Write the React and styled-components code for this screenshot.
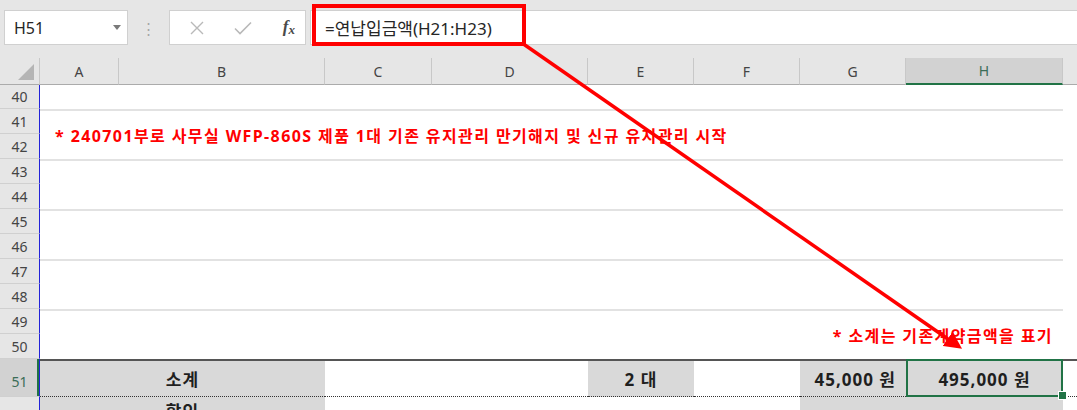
import React from "react";
import styled, { createGlobalStyle } from "styled-components";

const GlobalStyle = createGlobalStyle`
  html, body {
    margin: 0;
    padding: 0;
    height: 410px;
    overflow: hidden;
    background: #ffffff;
  }
  * { box-sizing: border-box; }
`;

const SANS = `"Noto Sans", "Noto Sans CJK KR", sans-serif`;
const GREEN = "#217346";

const App = () => {
  return (
    <Page>
      <GlobalStyle />
      <TopBar>
        <NameBox>
          <span>H51</span>
          <Caret />
        </NameBox>
        <Grip>⋮</Grip>
        <FxButtons>
          <svg width="14" height="14" viewBox="0 0 14 14">
            <path d="M1 1 L13 13 M13 1 L1 13" stroke="#b9b9b9" strokeWidth="1.4" fill="none" />
          </svg>
          <svg width="18" height="14" viewBox="0 0 18 14">
            <path d="M1 7.5 L6 12.5 L17 1.5" stroke="#b9b9b9" strokeWidth="1.6" fill="none" />
          </svg>
          <FxLabel>f<sub>x</sub></FxLabel>
        </FxButtons>
        <FormulaInput>=연납입금액(H21:H23)</FormulaInput>
      </TopBar>

      <Sheet>
        <Corner>
          <svg width="40" height="27" viewBox="0 0 40 27">
            <path d="M34 6 L34 22 L18 22 Z" fill="#b5b5b5" />
          </svg>
        </Corner>
        {["A", "B", "C", "D", "E", "F", "G", "H"].map((c, i) => (
          <ColHead key={c} $col={i + 2} $active={c === "H"}>{c}</ColHead>
        ))}
        <ColHead $col={10} $blank />

        {[40, 41, 42, 43, 44, 45, 46, 47, 48, 49, 50, 51, 52].map((n, i) => (
          <RowHead key={n} $row={i + 2} $active={n === 51} $tall={n >= 51}>{n}</RowHead>
        ))}

        <Block $rows="2 / 3" $first />
        <Block $rows="3 / 5">
          <Note>* 240701부로 사무실 WFP-860S 제품 1대 기존 유지관리 만기해지 및 신규 유지관리 시작</Note>
        </Block>
        <Block $rows="5 / 7" />
        <Block $rows="7 / 9" />
        <Block $rows="9 / 11" />
        <Block $rows="11 / 13" $right>
          <Note>* 소계는 기존계약금액을 표기</Note>
        </Block>

        <Cell $row={13} $cols="2 / 4" $fill>소계</Cell>
        <Cell $row={13} $cols="4 / 6" />
        <Cell $row={13} $cols="6 / 7" $fill>2 대</Cell>
        <Cell $row={13} $cols="7 / 8" />
        <Cell $row={13} $cols="8 / 9" $fill $align="flex-end">45,000 원</Cell>
        <Selected $row={13} $cols="9 / 10" $fill>495,000 원</Selected>
        <Cell $row={13} $cols="10 / 11" />

        <Cell $row={14} $cols="2 / 4" $fill $last>할인</Cell>
        <Cell $row={14} $cols="4 / 8" $last />
        <Cell $row={14} $cols="8 / 10" $fill $last />
        <Cell $row={14} $cols="10 / 11" $last />
      </Sheet>

      <Highlight />
      <Arrow viewBox="0 0 1077 410">
        <defs>
          <marker id="head" markerWidth="5" markerHeight="5" refX="3.6" refY="2.5" orient="auto" markerUnits="strokeWidth">
            <path d="M0 0 L5 2.5 L0 5 Z" fill="#ff0000" />
          </marker>
        </defs>
        <line x1="522" y1="43" x2="958" y2="346" stroke="#ff0000" strokeWidth="3.5" markerEnd="url(#head)" />
      </Arrow>
    </Page>
  );
};

export default App;

const Page = styled.div`
  position: relative;
  width: 1077px;
  height: 410px;
  overflow: hidden;
  font-family: ${SANS};
`;

const TopBar = styled.div`
  display: flex;
  align-items: flex-start;
  height: 58px;
  padding-top: 10px;
  background: #e6e6e6;
`;

const NameBox = styled.div`
  display: flex;
  align-items: center;
  justify-content: space-between;
  margin-left: 4px;
  width: 124px;
  height: 35px;
  padding: 0 6px 0 9px;
  background: #ffffff;
  border: 1px solid #d0d0d0;
  font-size: 16px;
  color: #262626;
`;

const Caret = styled.span`
  width: 0;
  height: 0;
  border-left: 4px solid transparent;
  border-right: 4px solid transparent;
  border-top: 5px solid #7a7a7a;
`;

const Grip = styled.div`
  width: 41px;
  height: 35px;
  display: flex;
  align-items: center;
  justify-content: center;
  color: #a6a6a6;
  font-size: 15px;
`;

const FxButtons = styled.div`
  display: flex;
  align-items: center;
  justify-content: space-between;
  width: 137px;
  height: 35px;
  padding: 0 10px 0 20px;
  background: #ffffff;
  border: 1px solid #d0d0d0;
`;

const FxLabel = styled.span`
  font-family: "Liberation Serif", serif;
  font-style: italic;
  font-weight: bold;
  font-size: 17px;
  color: #4a4a4a;
  sub {
    font-size: 13px;
    vertical-align: -2px;
  }
`;

const FormulaInput = styled.div`
  flex: 1;
  height: 35px;
  margin-left: 4px;
  padding-left: 14px;
  display: flex;
  align-items: center;
  background: #ffffff;
  border: 1px solid #d0d0d0;
  border-right: none;
  font-size: 17px;
  color: #262626;
`;

const Sheet = styled.div`
  display: grid;
  grid-template-columns: 40px 79px 206px 107px 156px 106px 106px 106px 157px 1fr;
  grid-template-rows: 27px 24px repeat(10, 25px) 38px 38px;
`;

const Corner = styled.div`
  grid-column: 1;
  grid-row: 1;
  background: #e6e6e6;
  border-bottom: 1px solid #ababab;
  border-right: 1px solid #c8c8c8;
`;

const ColHead = styled.div`
  grid-column: ${(p) => p.$col};
  grid-row: 1;
  display: flex;
  align-items: center;
  justify-content: center;
  font-size: 14px;
  color: ${(p) => (p.$active ? "#3b6d57" : "#444444")};
  background: ${(p) => (p.$active ? "#d2d2d2" : "#e6e6e6")};
  border-right: ${(p) => (p.$blank ? "none" : "1px solid #c8c8c8")};
  border-bottom: ${(p) => (p.$active ? `2px solid ${GREEN}` : "1px solid #ababab")};
`;

const RowHead = styled.div`
  grid-column: 1;
  grid-row: ${(p) => p.$row};
  display: flex;
  align-items: ${(p) => (p.$tall ? "flex-end" : "center")};
  padding-bottom: ${(p) => (p.$tall ? "5px" : "0")};
  justify-content: center;
  font-size: 14px;
  color: ${(p) => (p.$active ? "#3b6d57" : "#444444")};
  background: ${(p) => (p.$active ? "#d2d2d2" : "#e6e6e6")};
  border-bottom: 1px solid #d0d0d0;
  border-right: 1px solid #2323d8;
  box-shadow: ${(p) => (p.$active ? `inset -2px 0 0 ${GREEN}` : "none")};
`;

const Block = styled.div`
  grid-column: 2 / 10;
  grid-row: ${(p) => p.$rows};
  display: flex;
  align-items: center;
  justify-content: ${(p) => (p.$right ? "flex-end" : "flex-start")};
  padding: ${(p) => (p.$right ? "0 10px 0 0" : "0 0 0 15px")};
  border-top: ${(p) => (p.$first ? "none" : "2px solid #e2e2e2")};
`;

const Note = styled.span`
  color: #ff0000;
  font-weight: bold;
  font-size: 16px;
  letter-spacing: 1.4px;
  white-space: nowrap;
`;

const Cell = styled.div`
  grid-column: ${(p) => p.$cols};
  grid-row: ${(p) => p.$row};
  display: flex;
  align-items: ${(p) => (p.$last ? "flex-start" : "center")};
  justify-content: ${(p) => p.$align || "center"};
  padding: ${(p) => (p.$last ? "1px 10px 0" : "0 10px")};
  background: ${(p) => (p.$fill ? "#d9d9d9" : "#ffffff")};
  border-top: ${(p) => (p.$last ? "none" : "2px solid #555555")};
  border-bottom: ${(p) => (p.$last ? "none" : "1px dotted #333333")};
  font-weight: bold;
  font-size: 17px;
  letter-spacing: 1px;
  color: #1f1f1f;
`;

const Selected = styled(Cell)`
  position: relative;
  outline: 2px solid ${GREEN};
  outline-offset: -2px;

  &::after {
    content: "";
    position: absolute;
    right: -4px;
    bottom: -4px;
    width: 7px;
    height: 7px;
    background: ${GREEN};
    border: 1px solid #ffffff;
  }
`;

const Highlight = styled.div`
  position: absolute;
  left: 312px;
  top: 4px;
  width: 214px;
  height: 42px;
  border: 4px solid #ff0000;
  pointer-events: none;
`;

const Arrow = styled.svg`
  position: absolute;
  left: 0;
  top: 0;
  width: 1077px;
  height: 410px;
  pointer-events: none;
`;
